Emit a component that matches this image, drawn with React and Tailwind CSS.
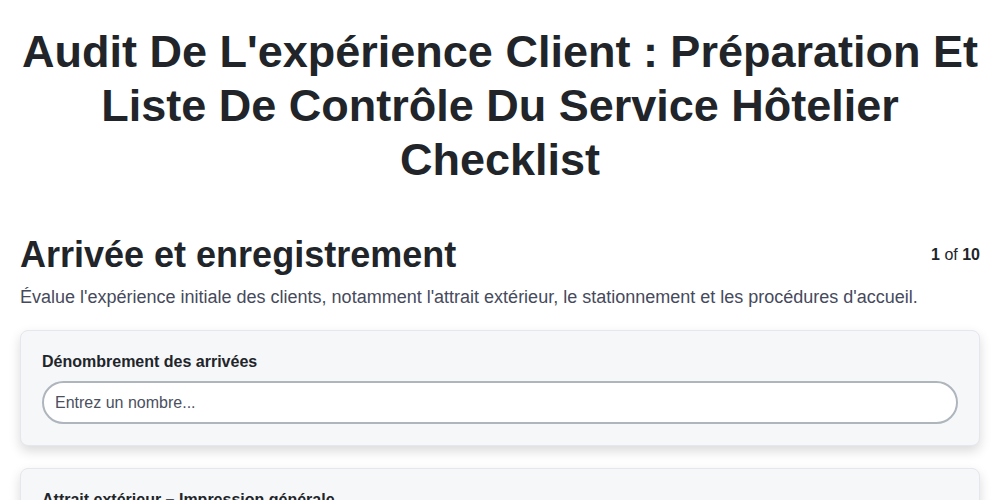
import React from "react";

const fields = [
  { label: "Dénombrement des arrivées", placeholder: "Entrez un nombre..." },
  { label: "Attrait extérieur – Impression générale", placeholder: "Entrez un texte..." },
];

export default function App() {
  return (
    <div className="min-h-screen bg-white text-[#212529] font-['Liberation_Sans',Arial,sans-serif]">
      <div className="px-5 pt-[25px]">
        <h1 className="text-center text-[45px] leading-[54px] font-bold">
          Audit De L'expérience Client : Préparation Et Liste De Contrôle Du Service Hôtelier Checklist
        </h1>

        <div className="mt-[46px] flex items-center justify-between">
          <h2 className="text-[36px] leading-[44px] font-bold">Arrivée et enregistrement</h2>
          <div className="text-[16px]">
            <span className="font-bold">1</span> of <span className="font-bold">10</span>
          </div>
        </div>
        <p className="mt-[9px] text-[18px] leading-[22px] text-[#464a5c]">
          Évalue l'expérience initiale des clients, notamment l'attrait extérieur, le stationnement et les procédures d'accueil.
        </p>

        <div className="mt-[22px] flex flex-col gap-[22px]">
          {fields.map((f) => (
            <div
              key={f.label}
              className="rounded-lg border border-[#e6e7ec] bg-[#f6f7f9] px-[21px] pt-[21px] pb-[21px] shadow-[0_5px_12px_rgba(0,0,0,0.15)]"
            >
              <label className="block text-[16px] leading-[20px] font-bold text-[#212529]">{f.label}</label>
              <input
                type="text"
                placeholder={f.placeholder}
                className="mt-[9px] block h-[43px] w-full rounded-full border-2 border-[#aeb5bd] bg-white px-[11px] text-[16px] text-[#212529] placeholder:text-[#4b5060] outline-none"
              />
            </div>
          ))}
        </div>
      </div>
    </div>
  );
}
